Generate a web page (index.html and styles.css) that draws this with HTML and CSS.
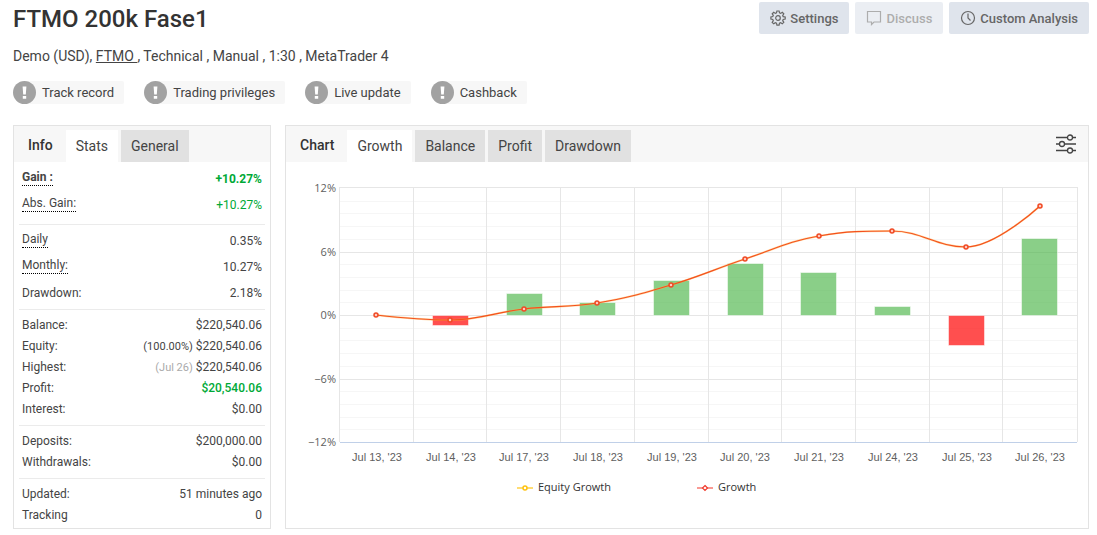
FILE: index.html
```html
<!DOCTYPE html>
<html lang="en">
<head>
<meta charset="utf-8">
<title>FTMO 200k Fase1</title>
<link rel="stylesheet" href="styles.css">
</head>
<body>
<div class="page">
  <header class="top">
    <h1 class="title">FTMO 200k Fase1</h1>
    <div class="actions">
      <button class="btn" type="button">
        <svg class="btn-icon" viewBox="0 0 16 16" aria-hidden="true"><path d="M6.9 1h2.2l.4 1.9 1.2.5 1.6-1.1 1.5 1.5-1.1 1.7.5 1.1 2 .4v2.100l-2 .4-.5 1.200 1.100 1.600-1.500 1.500-1.700-1.100-1.100.500-.4 1.900H6.900l-.4-1.900-1.200-.5-1.600 1.100-1.500-1.500 1.100-1.700-.5-1.100-1.900-.4V7l1.900-.4.5-1.200-1.100-1.600 1.500-1.500 1.700 1.100 1.100-.5z"/><circle cx="8" cy="8" r="2.300"/></svg>
        Settings
      </button>
      <button class="btn" type="button" disabled>
        <svg class="btn-icon" viewBox="0 0 16 16" aria-hidden="true"><path d="M1.500 1.500h13v10.500H8L5.500 14.500V12h-4z"/></svg>
        Discuss
      </button>
      <button class="btn" type="button">
        <svg class="btn-icon" viewBox="0 0 16 16" aria-hidden="true"><circle cx="8" cy="8" r="6.500"/><path d="M8 3.500V8l2.500 2.500"/></svg>
        Custom Analysis
      </button>
    </div>
  </header>
  <p class="meta">Demo (USD), <a class="broker" href="#">FTMO </a>, Technical , Manual , 1:30 , MetaTrader 4</p>
  <ul class="badges">
    <li class="badge"><svg class="badge-icon" viewBox="0 0 23 23" aria-hidden="true"><circle cx="11.500" cy="11.500" r="11.500"/><path class="mark" d="M9.600 5.500h3.800l-.6 8h-2.600zM9.800 15h3.400v2.800H9.800z"/></svg><span class="badge-text">Track record</span></li>
    <li class="badge"><svg class="badge-icon" viewBox="0 0 23 23" aria-hidden="true"><circle cx="11.500" cy="11.500" r="11.500"/><path class="mark" d="M9.600 5.500h3.800l-.6 8h-2.600zM9.800 15h3.400v2.800H9.800z"/></svg><span class="badge-text">Trading privileges</span></li>
    <li class="badge"><svg class="badge-icon" viewBox="0 0 23 23" aria-hidden="true"><circle cx="11.500" cy="11.500" r="11.500"/><path class="mark" d="M9.600 5.500h3.800l-.6 8h-2.600zM9.800 15h3.400v2.800H9.800z"/></svg><span class="badge-text">Live update</span></li>
    <li class="badge"><svg class="badge-icon" viewBox="0 0 23 23" aria-hidden="true"><circle cx="11.500" cy="11.500" r="11.500"/><path class="mark" d="M9.600 5.500h3.800l-.6 8h-2.600zM9.800 15h3.400v2.800H9.800z"/></svg><span class="badge-text">Cashback</span></li>
  </ul>
  <main class="columns">
    <section class="panel">
      <div class="tabs">
        <h2 class="tabs-title">Info</h2>
        <button class="tab active" type="button">Stats</button>
        <button class="tab" type="button">General</button>
      </div>
      <div class="stats">
        <dl class="group first">
          <div class="row tall gain"><dt class="hint">Gain :</dt><dd class="up">+10.27%</dd></div>
          <div class="row tall"><dt class="hint">Abs. Gain:</dt><dd class="up">+10.27%</dd></div>
        </dl>
        <dl class="group rates">
          <div class="row tall"><dt class="hint">Daily</dt><dd>0.35%</dd></div>
          <div class="row tall"><dt class="hint">Monthly:</dt><dd>10.27%</dd></div>
          <div class="row"><dt>Drawdown:</dt><dd>2.18%</dd></div>
        </dl>
        <dl class="group">
          <div class="row"><dt>Balance:</dt><dd>$220,540.06</dd></div>
          <div class="row"><dt>Equity:</dt><dd><span class="note">(100.00%)</span> $220,540.06</dd></div>
          <div class="row"><dt>Highest:</dt><dd><span class="note faint">(Jul 26)</span> $220,540.06</dd></div>
          <div class="row"><dt>Profit:</dt><dd class="up profit">$20,540.06</dd></div>
          <div class="row"><dt>Interest:</dt><dd>$0.00</dd></div>
        </dl>
        <dl class="group">
          <div class="row"><dt>Deposits:</dt><dd>$200,000.00</dd></div>
          <div class="row"><dt>Withdrawals:</dt><dd>$0.00</dd></div>
        </dl>
        <dl class="group">
          <div class="row"><dt>Updated:</dt><dd>51 minutes ago</dd></div>
          <div class="row"><dt>Tracking</dt><dd>0</dd></div>
        </dl>
      </div>
    </section>
    <section class="panel">
      <div class="tabs">
        <h2 class="tabs-title">Chart</h2>
        <button class="tab active" type="button">Growth</button>
        <button class="tab" type="button">Balance</button>
        <button class="tab" type="button">Profit</button>
        <button class="tab" type="button">Drawdown</button>
        <button class="filter" type="button" aria-label="Chart options">
          <svg class="filter-icon" viewBox="0 0 22 20"><path d="M1 3.500h11.500M17.500 3.500H21M1 10h3.500M9.500 10H21M1 16.500h11.500M17.500 16.500H21"/><circle cx="15" cy="3.500" r="2.500"/><circle cx="7" cy="10" r="2.500"/><circle cx="15" cy="16.500" r="2.500"/></svg>
        </button>
      </div>
      <svg class="chart" viewBox="286 162 802 366" role="img" aria-label="Growth chart">
        <path class="grid-minor" d="M340 201.500H1077M340 213.500H1077M340 226.500H1077M340 239.500H1077M340 264.500H1077M340 277.500H1077M340 290.500H1077M340 302.500H1077M340 328.500H1077M340 340.500H1077M340 353.500H1077M340 366.500H1077M340 391.500H1077M340 404.500H1077M340 417.500H1077M340 429.500H1077"/>
        <path class="grid" d="M339 187.500H1078M339 252.500H1077M339 315.500H1077M339 379.500H1077M339.500 187V442M413.500 187V442M486.500 187V442M560.500 187V442M634.500 187V442M708.500 187V442M781.500 187V442M855.500 187V442M929.500 187V442M1002.500 187V442M1077.500 187V442"/>
        <path class="axis" d="M340 442.500H1077"/>
        <g class="bar-up">
          <path d="M506.500 293.500h36v22h-36zM579.500 302.500h36v13h-36zM653.500 280.500h36v35h-36zM727.500 263.500h36v52h-36zM800.500 272.500h36v43h-36zM874.500 306.500h36v9h-36zM1021.500 238.500h36v77h-36z"/>
        </g>
        <g class="bar-down">
          <path d="M432.500 315.500h36v10h-36zM948.500 315.500h36v30h-36z"/>
        </g>
        <path class="line-equity" d="M376 315C376 315 420.500 320 450 320S494.500 312.400 524 309S567.500 307.800 597 303S641.500 293.800 671 285S715.500 268.800 745 259S789.500 241 819 236S862.500 231 892 231S936.500 247 966 247S1040 206 1040 206"/>
        <path class="line-growth" d="M376 315C376 315 420.500 320 450 320S494.500 312.400 524 309S567.500 307.800 597 303S641.500 293.800 671 285S715.500 268.800 745 259S789.500 241 819 236S862.500 231 892 231S936.500 247 966 247S1040 206 1040 206"/>
        <g class="points">
          <circle cx="376" cy="315" r="2"/><circle cx="450" cy="320" r="2"/><circle cx="524" cy="309" r="2"/><circle cx="597" cy="303" r="2"/><circle cx="671" cy="285" r="2"/><circle cx="745" cy="259" r="2"/><circle cx="819" cy="236" r="2"/><circle cx="892" cy="231" r="2"/><circle cx="966" cy="247" r="2"/><circle cx="1040" cy="206" r="2"/>
        </g>
        <g class="label-y">
          <text x="336" y="192">12%</text><text x="336" y="256">6%</text><text x="336" y="319">0%</text><text x="336" y="383">−6%</text><text x="336" y="446">−12%</text>
        </g>
        <g class="label-x">
          <text x="377" y="461">Jul 13, '23</text><text x="451" y="461">Jul 14, '23</text><text x="524" y="461">Jul 17, '23</text><text x="598" y="461">Jul 18, '23</text><text x="672" y="461">Jul 19, '23</text><text x="745" y="461">Jul 20, '23</text><text x="819" y="461">Jul 21, '23</text><text x="893" y="461">Jul 24, '23</text><text x="967" y="461">Jul 25, '23</text><text x="1040" y="461">Jul 26, '23</text>
        </g>
        <g class="legend">
          <path class="key-equity" d="M517 488h16"/><circle class="dot-equity" cx="525" cy="488" r="2"/><text x="538" y="491">Equity Growth</text>
          <path class="key-growth" d="M697 488h16"/><path class="dot-growth" d="M705 485.500l2.500 2.500-2.500 2.500-2.500-2.500z"/><text x="718" y="491">Growth</text>
        </g>
      </svg>
    </section>
  </main>
</div>
</body>
</html>
```
FILE: styles.css
```css
* { box-sizing: border-box; }
body {
  margin: 0;
  background: #fff;
  color: #444;
  font: 12px/21px Roboto, "Liberation Sans", sans-serif;
}
h1, h2, p, ul, dl, dd { margin: 0; padding: 0; }
button { font: inherit; color: inherit; border: 0; margin: 0; }
.page { padding: 2px 8px 6px 13px; }

.top { display: flex; justify-content: space-between; align-items: flex-start; }
.title { font-size: 24px; font-weight: 500; line-height: 34px; color: #333; }
.actions { display: flex; gap: 6px; }
.btn {
  display: flex;
  align-items: center;
  gap: 4px;
  height: 32px;
  padding: 0 11px;
  border-radius: 2px;
  background: #dfe4ec;
  color: #666;
  font-size: 13px;
  font-weight: 500;
}
.btn:disabled { opacity: .6; color: #777; }
.btn-icon { width: 16px; height: 16px; fill: none; stroke: currentColor; stroke-width: 1.2; }

.meta { margin-top: 9px; font-size: 14px; line-height: 22px; }
.broker { color: inherit; text-decoration: underline; white-space: pre; }

.badges { display: flex; gap: 20px; margin-top: 14px; list-style: none; }
.badge { display: flex; align-items: center; height: 23px; }
.badge-icon { width: 23px; height: 23px; fill: #a2a2a2; flex: none; z-index: 1; }
.mark { fill: #fff; }
.badge-text {
  margin-left: -11px;
  padding: 0 10px 0 17px;
  border-radius: 2px;
  background: #f7f7f7;
  font-size: 13px;
  line-height: 23px;
}

.columns { display: grid; grid-template-columns: 258px 1fr; gap: 14px; margin-top: 21px; }
.panel { border: 1px solid #e3e3e3; min-width: 0; }
.tabs { display: flex; gap: 3px; height: 36px; padding: 4px 11px 0 14px; background: #f7f7f7; }
.tabs-title { margin-right: 10px; font-size: 14px; font-weight: 500; line-height: 31px; color: #333; }
.tab { padding: 0 10px; background: #e1e1e1; font-size: 14px; line-height: 31px; }
.tab.active { background: #fff; }
.filter { margin-left: auto; padding: 0; height: 28px; background: none; }
.filter-icon { display: block; width: 22px; height: 20px; fill: none; stroke: #444; stroke-width: 1.3; }

.stats { padding: 0 5px; }
.group { padding: 5px 3px; border-top: 1px solid #ebebeb; }
.group.first { padding: 7px 3px 3px; border-top: 0; }
.group.rates { padding-top: 6px; }
.group:last-child { padding-bottom: 2px; }
.row { display: flex; justify-content: space-between; align-items: flex-start; }
.tall { padding-bottom: 5px; }
.hint { line-height: 16px; border-bottom: 1px dotted #000; }
.gain { font-weight: 700; }
.up { color: #00a937; }
.profit { font-weight: 500; }
.note { font-size: 11px; }
.faint { color: #aaa; }

.chart { display: block; width: 100%; height: auto; }
.grid-minor { stroke: #f6f6f6; }
.grid { stroke: #e6e6e6; fill: none; }
.axis { stroke: #c0d0e8; }
.bar-up { fill: #4bb648; fill-opacity: .65; stroke: #fff; stroke-opacity: .5; }
.bar-down { fill: #ff1414; fill-opacity: .75; stroke: #fff; stroke-opacity: .5; }
.line-equity { fill: none; stroke: #ffb347; stroke-width: 2; stroke-opacity: .5; }
.line-growth { fill: none; stroke: #f4511e; stroke-width: 1.2; }
.points { fill: #ffc9c0; stroke: #f04a24; stroke-width: 1.5; }
.label-y, .legend { font: 11px "Open Sans", "Noto Sans", sans-serif; fill: #606060; }
.label-y { text-anchor: end; }
.label-x { font: 11px "Liberation Sans", Arial, sans-serif; fill: #606060; text-anchor: middle; }
.legend { fill: #333; }
.key-equity { stroke: #ffdc73; stroke-width: 2; }
.dot-equity { fill: #fff; stroke: #ffc20e; stroke-width: 1.5; }
.key-growth { stroke: #f99a94; stroke-width: 2; }
.dot-growth { fill: #fff; stroke: #f0392b; stroke-width: 1.2; }
```
